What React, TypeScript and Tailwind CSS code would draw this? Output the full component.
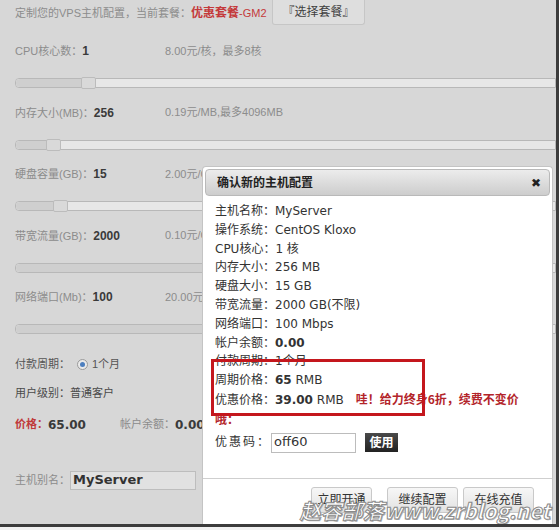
const bgFont = "font-['Liberation_Sans','Noto_Sans_CJK_SC',sans-serif]";
const dlgFont = "font-['DejaVu_Sans','Noto_Sans_CJK_SC',sans-serif]";

type Opt = { label: string; value: string; price: string; fill: number; handle: boolean };

const options: Opt[] = [
  { label: 'CPU核心数：', value: '1', price: '8.00元/核，最多8核', fill: 65, handle: true },
  { label: '内存大小(MB)：', value: '256', price: '0.19元/MB,最多4096MB', fill: 30, handle: true },
  { label: '硬盘容量(GB)：', value: '15', price: '2.00元/GB', fill: 37, handle: true },
  { label: '带宽流量(GB)：', value: '2000', price: '0.10元/GB', fill: 520, handle: false },
  { label: '网络端口(Mb)：', value: '100', price: '20.00元/Mb', fill: 520, handle: false },
];

const details: [string, string, boolean?][] = [
  ['主机名称：', 'MyServer'],
  ['操作系统：', 'CentOS Kloxo'],
  ['CPU核心：', '1 核'],
  ['内存大小：', '256 MB'],
  ['硬盘大小：', '15 GB'],
  ['带宽流量：', '2000 GB(不限)'],
  ['网络端口：', '100 Mbps'],
  ['帐户余额：', '0.00', true],
  ['付款周期：', '1个月'],
];

function Slider({ fill, handle }: { fill: number; handle: boolean }) {
  return (
    <div className="relative h-[10px] rounded-l-[4px] border border-[#b8b8b8] bg-[#e7e7e7]">
      <div className="h-full rounded-l-[4px] bg-[#cfcfcf]" style={{ width: fill }} />
      {handle && (
        <div
          className="absolute top-[-2px] h-[12px] w-[15px] rounded-[2px] border border-[#bcbcbc] bg-[#d9d9d9]"
          style={{ left: fill }}
        />
      )}
    </div>
  );
}

function DlgButton({ text, className }: { text: string; className?: string }) {
  return (
    <div
      className={`flex h-[26px] items-center justify-center rounded-[3px] border border-[#c9c9c9] bg-gradient-to-b from-[#f7f7f7] to-[#e2e2e2] text-[12px] text-[#333] ${className ?? ''}`}
    >
      {text}
    </div>
  );
}

export default function App() {
  return (
    <div className="h-[530px] w-[559px] overflow-hidden bg-[#f2f2f2]">
      <div
        className={`relative h-[527px] w-[559px] overflow-hidden border-r-[3px] border-b-[3px] border-[#3c3c3c] bg-[#d7d7d7] ${bgFont} text-[11px] text-[#8c8c8c]`}
      >
        {/* page under the overlay */}
        <div className="pl-[15px]">
          <div className="flex h-[25px] items-center">
            <span className="w-[257px] whitespace-nowrap">
              定制您的VPS主机配置，当前套餐：
              <b className="text-[12px] text-[#c4393a]">优惠套餐</b>
              <span className="text-[#c4393a]">-GM2</span>
            </span>
            <div className="flex h-[25px] w-[93px] items-center justify-center rounded-b-[3px] border border-t-0 border-[#c6c6c6] bg-[#dedede] text-[12px] text-[#3f3f3f]">
              『选择套餐』
            </div>
          </div>

          <div className="mt-[16px]">
            {options.map((o) => (
              <div key={o.label} className="h-[61.5px]">
                <div className="flex h-[20px] items-center">
                  <span className="w-[150px] whitespace-nowrap">
                    {o.label}
                    <b className="text-[12px] text-[#3a3a3a]">{o.value}</b>
                  </span>
                  <span className="whitespace-nowrap">{o.price}</span>
                </div>
                <div className="mt-[17px]">
                  <Slider fill={o.fill} handle={o.handle} />
                </div>
              </div>
            ))}
          </div>

          <div className="mt-[6px] flex h-[20px] items-center text-[#555]">
            付款周期：
            <span className="ml-[7px] mr-[4px] flex h-[11px] w-[11px] items-center justify-center rounded-full border border-[#9a9a9a] bg-[#eaeaea]">
              <span className="h-[5px] w-[5px] rounded-full bg-[#4d7fbf]" />
            </span>
            1个月
          </div>
          <div className="mt-[9px] flex h-[20px] items-center text-[#4a4a4a]">用户级别：普通客户</div>
          <div className="mt-[11px] flex h-[20px] items-center">
            <b className="text-[#c0393a]">价格：</b>
            <b className="w-[72px] font-['DejaVu_Sans',sans-serif] text-[12px] text-[#3a3a3a]">65.00</b>
            帐户余额：
            <b className="font-['DejaVu_Sans',sans-serif] text-[12px] text-[#3a3a3a]">0.00</b>
          </div>
          <div className="mt-[36px] flex h-[19px] items-center">
            主机别名：
            <div className="flex h-[19px] w-[126px] items-center border border-[#bdbdbd] bg-[#e1e1e1] px-[2px] font-['DejaVu_Sans',sans-serif] text-[13px] font-bold text-[#333]">
              MyServer
            </div>
          </div>
        </div>

        {/* confirm dialog */}
        <div
          className={`absolute top-[166px] bottom-0 left-[202px] flex w-[351px] flex-col rounded-t-[4px] border border-b-0 border-[#c4c4c4] bg-white p-[2px] pb-0 ${dlgFont} text-[12px] text-[#333]`}
        >
          <div className="flex h-[27px] items-center justify-between rounded-[4px] border border-[#b9b9b9] bg-gradient-to-b from-[#ececec] to-[#cdcdcd] pl-[11px] pr-[8px]">
            <b className="text-[12px] text-[#222]">确认新的主机配置</b>
            <span className="text-[12px] leading-none text-[#222]">✖</span>
          </div>

          <div className="px-[10px] pt-[6px] leading-[18.8px]">
            {details.map(([k, v, bold]) => (
              <div key={k} className="whitespace-nowrap">
                {k}
                {bold ? <b>{v}</b> : v}
              </div>
            ))}
            <div className="whitespace-nowrap">
              周期价格：<b>65</b> RMB
            </div>
            <div className="whitespace-nowrap">
              优惠价格：<b>39.00</b> RMB
              <b className="ml-[12px] font-['Noto_Sans_CJK_SC',sans-serif] text-[#b3242a]">哇！给力终身6折，续费不变价</b>
            </div>
            <div>
              <b className="font-['Noto_Sans_CJK_SC',sans-serif] text-[#b3242a]">哦：</b>
            </div>
            <div className="mt-[3px] flex h-[20px] items-center">
              <span className="tracking-[2px]">优惠码：</span>
              <div className="flex h-[20px] w-[85px] items-center border border-[#bcbcbc] px-[2px] text-[13px]">
                off60
              </div>
              <div className="ml-[9px] flex h-[19px] w-[33px] items-center justify-center bg-gradient-to-b from-[#4a4a4a] to-[#222] font-['Noto_Sans_CJK_SC',sans-serif] text-[12px] font-bold text-white">
                使用
              </div>
            </div>
          </div>

          <div className="mt-auto mx-[-2px] flex h-[46px] justify-end border-t border-[#cfcfcf] pt-[8px] pr-[18px]">
            <DlgButton text="立即开通" className="w-[61px]" />
            <DlgButton text="继续配置" className="ml-[15px] w-[71px]" />
            <DlgButton text="在线充值" className="ml-[5px] w-[71px]" />
          </div>
        </div>

        {/* annotation box */}
        <div className="absolute top-[359px] left-[211px] h-[57px] w-[214px] border-[3px] border-[#c4171d]" />

        {/* watermark */}
        <div className="absolute right-[6px] bottom-[3px] whitespace-nowrap font-['Noto_Sans_CJK_SC',sans-serif] text-[21px] leading-none font-bold italic text-white [-webkit-text-stroke:1px_#8a8a8a] [text-shadow:1px_1px_0_#b5b5b5]">
          赵容部落www.zrblog.net
        </div>
      </div>
    </div>
  );
}
